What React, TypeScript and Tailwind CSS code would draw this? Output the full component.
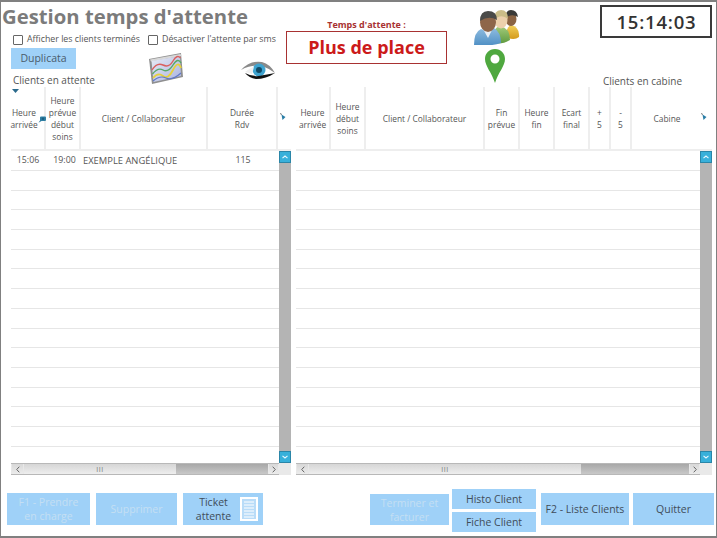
import React from 'react';

// lines under the first row, same in both grids
const EMPTY_ROWS = 14;

function Bubble({ className }: { className: string }) {
  return (
    <svg viewBox="0 0 8 7" className={`absolute ${className}`}>
      <path d="M2 1.5 Q2 .5 3 .5 H7 Q8 .5 8 1.5 V4 Q8 5 7 5 H3.5 L.5 6.8 L2 4.5 Z" fill="#2f7fa3" />
      <circle cx="5" cy="2.8" r="1.3" fill="#1d5f80" />
    </svg>
  );
}

function PinHandle({ className }: { className: string }) {
  return (
    <svg viewBox="0 0 6 8" className={`absolute ${className}`}>
      <path d="M0 .5 L2 1.5" stroke="#555" strokeWidth="0.8" />
      <path d="M1.5 1.5 L5.5 4 L2.5 7 Z" fill="#2a7da6" />
    </svg>
  );
}

function HeaderCell({ w, lines, last, extra = '' }: { w: string; lines: string[]; last?: boolean; extra?: string }) {
  return (
    <div className={`${w} ${extra} h-full shrink-0 flex flex-col items-center justify-center pt-[2px] ${last ? '' : 'border-r-2 border-[#eeeeee]'}`}>
      {lines.map((l, i) => (
        <div key={i} className="text-[8.4px] leading-[12px] text-[#555555] whitespace-nowrap">{l}</div>
      ))}
    </div>
  );
}

function ScrollBtn({ up }: { up?: boolean }) {
  return (
    <div className="w-full h-[12px] shrink-0 bg-[#38b0da] border border-[#2a86a8] flex items-center justify-center">
      <svg viewBox="0 0 6 4" className="w-[6px] h-[4px]">
        <path d={up ? 'M.5 3.2 L3 1 L5.5 3.2' : 'M.5 .8 L3 3 L5.5 .8'} fill="none" stroke="#e8f8ff" strokeWidth="1.1" />
      </svg>
    </div>
  );
}

function HArrow({ right, w }: { right?: boolean; w: string }) {
  return (
    <div className={`${w} h-full shrink-0 flex items-center justify-center bg-gradient-to-b from-[#d8d8d8] to-[#ececec] border-x border-[#e8e8e8]`}>
      <svg viewBox="0 0 4 7" className="w-[4px] h-[7px]">
        <path d={right ? 'M.7 .7 L3.3 3.5 L.7 6.3' : 'M3.3 .7 L.7 3.5 L3.3 6.3'} fill="none" stroke="#666" strokeWidth="1" />
      </svg>
    </div>
  );
}

function GridTable({
  width,
  thumb,
  children,
  firstRow,
}: {
  width: string;
  thumb: string;
  children: React.ReactNode;
  firstRow: React.ReactNode;
}) {
  return (
    <div className={`${width} h-full flex flex-col shrink-0`}>
      <div className="h-[64px] flex border-b-2 border-[#eeeeee] shrink-0 relative">{children}</div>
      <div className="flex h-[312px] shrink-0">
        <div className="flex-1 flex flex-col min-w-0">
          {firstRow}
          {Array.from({ length: EMPTY_ROWS }).map((_, i) => (
            <div key={i} className="h-[19.7px] shrink-0 border-b border-[#e6e6e6]" />
          ))}
        </div>
        <div className="w-[12px] shrink-0 flex flex-col bg-[#b4b4b4]">
          <ScrollBtn up />
          <div className="flex-1" />
          <ScrollBtn />
        </div>
      </div>
      <div className="h-[12px] flex shrink-0">
        <div className="flex-1 flex min-w-0 border-y border-[#b8b8b8]">
          <HArrow w="w-[13px]" />
          <div className={`${thumb} h-full shrink-0 flex items-center justify-center bg-gradient-to-b from-[#d6d6d6] to-[#eeeeee]`}>
            <span className="text-[7px] leading-none text-[#777777] tracking-[0.5px]">III</span>
          </div>
          <div className="flex-1 h-full bg-gradient-to-b from-[#a8a8a8] to-[#c8c8c8]" />
          <HArrow right w="w-[11px]" />
        </div>
        <div className="w-[12px] shrink-0 bg-[#e9e9e9]" />
      </div>
    </div>
  );
}

function ActionBtn({
  children,
  w,
  h = 'h-[32px]',
  disabled,
}: {
  children: React.ReactNode;
  w: string;
  h?: string;
  disabled?: boolean;
}) {
  return (
    <div
      className={`${w} ${h} shrink-0 bg-[#9fd1f8] flex items-center justify-center text-center text-[10.5px] leading-[14px] ${
        disabled ? 'text-[#c4dff3]' : 'text-[#3f4d5a]'
      }`}
    >
      {children}
    </div>
  );
}

function PeopleIcon() {
  return (
    <svg viewBox="0 0 46 35" className="w-[46px] h-[35px] shrink-0">
      <defs>
        <linearGradient id="shirtBlue" x1="0" y1="0" x2="0" y2="1">
          <stop offset="0" stopColor="#8fbce0" />
          <stop offset="1" stopColor="#4f8fc4" />
        </linearGradient>
        <linearGradient id="shirtGreen" x1="0" y1="0" x2="0" y2="1">
          <stop offset="0" stopColor="#a4cc7c" />
          <stop offset="1" stopColor="#5f9a3f" />
        </linearGradient>
        <linearGradient id="shirtYellow" x1="0" y1="0" x2="0" y2="1">
          <stop offset="0" stopColor="#f2d05a" />
          <stop offset="1" stopColor="#d49a1c" />
        </linearGradient>
      </defs>
      <path d="M32 27 Q32 17 37 15 Q46 17 45 27 Q40 31 32 27 Z" fill="url(#shirtYellow)" />
      <ellipse cx="37" cy="9" rx="5.5" ry="7" fill="#8a6343" />
      <path d="M31 8 Q32 0 37 0 Q43 0 44 7 Q38 3 31 8 Z" fill="#3a3a38" />
      <path d="M19 33 Q18 18 26 16 Q36 18 36 30 Q28 35 19 33 Z" fill="url(#shirtGreen)" />
      <ellipse cx="27" cy="10" rx="6.5" ry="8.5" fill="#ecd0ac" />
      <path d="M20 10 Q20 0 27 0 Q34 0 34 9 Q27 3 20 10 Z" fill="#cbbd88" />
      <path d="M0 35 Q0 22 7 19 L14 22 L20 18 Q27 22 27 33 Q14 37 0 35 Z" fill="url(#shirtBlue)" />
      <path d="M9 19 L14 28 L19 18 L14 21 Z" fill="#e8eef4" />
      <ellipse cx="14" cy="12" rx="8" ry="10" fill="#8e664a" />
      <path d="M6 11 Q6 1 14 1 Q23 1 23 10 Q15 5 6 11 Z" fill="#4a4a48" />
    </svg>
  );
}

function ChartIcon() {
  return (
    <svg viewBox="0 0 36 32" className="w-[36px] h-[32px] mt-[5px] shrink-0">
      <defs>
        <linearGradient id="chartBg" x1="0" y1="0" x2="1" y2="1">
          <stop offset="0" stopColor="#e8ecf6" />
          <stop offset="1" stopColor="#a9b2de" />
        </linearGradient>
      </defs>
      <path d="M1 6 L33 0 L35 24 L4 31 Z" fill="#8f8f8f" />
      <path d="M2 6.5 L32.5 1 L33.5 3 L3 8.5 Z" fill="#d8d8d8" />
      <path d="M3.5 8 L32 3 L33 23 L5.5 29 Z" fill="url(#chartBg)" />
      <path d="M4 17 Q9 9 15 12 T25 8 T32.5 5" fill="none" stroke="#d9605f" strokeWidth="1.4" />
      <path d="M4.5 21 Q10 14 15 17 T25 12 T33 10" fill="none" stroke="#58a868" strokeWidth="1.4" />
      <path d="M5 25 Q10 19 15 23 T25 17 T33 15" fill="none" stroke="#e6d13c" strokeWidth="1.8" />
      <path d="M5 28 Q12 22 18 25 T33 20" fill="none" stroke="#5f78c6" strokeWidth="1.1" />
    </svg>
  );
}

export default function App() {
  return (
    <div
      className="w-[717px] h-[538px] bg-white overflow-hidden flex flex-col"
      style={{ fontFamily: '"Open Sans", "Noto Sans", sans-serif' }}
    >
      <div className="h-[538px] border-x border-t-2 border-b-2 border-[#808080] flex flex-col shrink-0">
        {/* top area */}
        <div className="h-[85px] flex shrink-0">
          <div className="w-[282px] shrink-0 flex flex-col">
            <h1 className="text-[20.3px] leading-[28px] font-bold text-[#7b7b7b] pl-[1px] whitespace-nowrap">Gestion temps d'attente</h1>
            <div className="flex items-center mt-[3px] pl-[12px] h-[13px] text-[8.8px] text-[#555555] whitespace-nowrap">
              <span className="w-[10px] h-[10px] border border-[#666666] rounded-[1px] mr-[4px] shrink-0" />
              <span className="w-[121px] shrink-0">Afficher les clients terminés</span>
              <span className="w-[10px] h-[10px] border border-[#666666] rounded-[1px] mr-[4px] shrink-0" />
              <span>Désactiver l'attente par sms</span>
            </div>
            <div className="flex pl-[10px] mt-[2px]">
              <div className="w-[137px] shrink-0">
                <div className="w-[65px] h-[21px] bg-[#9fd1f8] flex items-center justify-center text-[10.5px] text-[#4a5b6b]">Duplicata</div>
                <div className="pl-[2px] mt-[4px] text-[10px] leading-[14px] text-[#555555] whitespace-nowrap">Clients en attente</div>
              </div>
              <ChartIcon />
              <svg viewBox="0 0 36 20" className="w-[36px] h-[20px] mt-[11px] ml-[56px] shrink-0">
                <path d="M1 11 Q10 1 22 3 Q30 5 35 14 Q28 9 22 7 Q12 5 1 11 Z" fill="#8a8a8a" />
                <circle cx="19" cy="11" r="6.5" fill="#3ea3cf" />
                <circle cx="19" cy="11" r="3" fill="#124a66" />
                <path d="M5 13 Q12 8 14 8 L12 15 Q10 14 5 13 Z" fill="#efefef" />
                <path d="M5 14 Q14 19 24 16 Q30 15 35 14 Q26 20 16 20 Q9 19 5 14 Z" fill="#111111" />
              </svg>
            </div>
          </div>
          <div className="w-[161px] ml-[3px] shrink-0 flex flex-col items-center pt-[17px]">
            <div className="text-[9px] leading-[12px] font-bold text-[#a83232] whitespace-nowrap">Temps d'attente :</div>
            <div className="w-full h-[33px] border border-[#a83232] flex items-center justify-center text-[18px] font-bold text-[#cc1a1a] whitespace-nowrap">Plus de place</div>
          </div>
          <div className="w-[50px] ml-[27px] shrink-0 flex flex-col items-start pt-[8px]">
            <PeopleIcon />
            <svg viewBox="0 0 20 34" className="w-[20px] h-[34px] mt-[4px] ml-[11px] shrink-0">
              <path fillRule="evenodd" d="M10 0 C4 0 0 4.5 0 10 C0 17 7 24 10 34 C13 24 20 17 20 10 C20 4.5 16 0 10 0 Z M10 5.5 A4.5 4.5 0 1 1 10 14.5 A4.5 4.5 0 1 1 10 5.5 Z" fill="#4fa83f" />
            </svg>
          </div>
          <div className="flex-1 min-w-0 flex flex-col items-end pt-[3px] pr-[4px]">
            <div className="w-[112px] h-[33px] border-2 border-[#3a3a3a] flex items-center justify-center pl-[1px] text-[18.5px] font-semibold tracking-[0.8px] text-[#333333]">15:14:03</div>
            <div className="mt-auto mb-[-1px] pr-[30px] text-[10px] leading-[14px] text-[#555555] whitespace-nowrap">Clients en cabine</div>
          </div>
        </div>

        {/* tables */}
        <div className="h-[388px] flex pl-[10px] shrink-0">
          <GridTable
            width="w-[280px]"
            thumb="w-[152px]"
            firstRow={
              <div className="h-[20px] shrink-0 flex items-center pt-[1px] border-b border-[#e6e6e6] text-[8.8px] text-[#555555]">
                <span className="w-[34px] text-center shrink-0">15:06</span>
                <span className="w-[36px] pl-[3px] text-center shrink-0">19:00</span>
                <span className="w-[127px] pl-[2px] text-[9.4px] shrink-0 whitespace-nowrap">EXEMPLE ANGÉLIQUE</span>
                <span className="w-[70px] text-center shrink-0">115</span>
              </div>
            }
          >
            <HeaderCell w="w-[35px]" extra="pr-[7px]" lines={['Heure', 'arrivée']} />
            <HeaderCell w="w-[35px]" lines={['Heure', 'prévue', 'début', 'soins']} />
            <HeaderCell w="w-[127px]" lines={['Client / Collaborateur']} />
            <HeaderCell w="w-[70px]" lines={['Durée', 'Rdv']} />
            <HeaderCell w="w-[13px]" lines={[]} last />
            <svg viewBox="0 0 7 4" className="absolute left-[1px] top-[2px] w-[7px] h-[4px]">
              <path d="M0 0 H7 L3.5 4 Z" fill="#2b6a8c" />
            </svg>
            <Bubble className="left-[27px] top-[29px] w-[8px] h-[7px]" />
            <PinHandle className="left-[269px] top-[26px] w-[6px] h-[8px]" />
          </GridTable>
          <div className="w-[5px] shrink-0" />
          <GridTable
            width="w-[416px]"
            thumb="w-[272px]"
            firstRow={<div className="h-[20px] shrink-0 border-b border-[#e6e6e6]" />}
          >
            <HeaderCell w="w-[35px]" lines={['Heure', 'arrivée']} />
            <HeaderCell w="w-[35px]" lines={['Heure', 'début', 'soins']} />
            <HeaderCell w="w-[119px]" lines={['Client / Collaborateur']} />
            <HeaderCell w="w-[35px]" lines={['Fin', 'prévue']} />
            <HeaderCell w="w-[35px]" lines={['Heure', 'fin']} />
            <HeaderCell w="w-[35px]" lines={['Ecart', 'final']} />
            <HeaderCell w="w-[21px]" lines={['+', '5']} />
            <HeaderCell w="w-[21px]" lines={['-', '5']} />
            <HeaderCell w="w-[80px]" extra="pr-[10px]" lines={['Cabine']} last />
            <PinHandle className="left-[405px] top-[26px] w-[6px] h-[8px]" />
          </GridTable>
        </div>

        {/* action buttons */}
        <div className="flex-1 min-h-0 flex items-start pl-[6px] pt-[14px]">
          <div className="flex gap-[6px] mt-[4px]">
            <ActionBtn w="w-[83px]" disabled>
              <span>F1 - Prendre<br />en charge</span>
            </ActionBtn>
            <ActionBtn w="w-[81px]" disabled>Supprimer</ActionBtn>
            <ActionBtn w="w-[80px]">
              <span className="w-[50px]">Ticket<br />attente</span>
              <svg viewBox="0 0 18 24" className="w-[18px] h-[24px] ml-[1px]">
                <rect x="1" y="1" width="16" height="22" fill="#b9dcf8" stroke="#ffffff" strokeWidth="2" />
                <path d="M4 5H14M4 8H14M4 11H14M4 14H14M4 17H14M4 20H14" stroke="#ffffff" strokeWidth="1" />
              </svg>
            </ActionBtn>
          </div>
          <div className="flex items-start ml-[107px] h-[43px]">
            <div className="mt-[5px]">
              <ActionBtn w="w-[79px]" h="h-[31px]" disabled>
                <span>Terminer et<br />facturer</span>
              </ActionBtn>
            </div>
            <div className="flex flex-col gap-[3px] ml-[3px] mr-[5px]">
              <ActionBtn w="w-[84px]" h="h-[20px]">Histo Client</ActionBtn>
              <ActionBtn w="w-[84px]" h="h-[20px]">Fiche Client</ActionBtn>
            </div>
            <div className="flex gap-[4px] mt-[4px]">
              <ActionBtn w="w-[88px]">F2 - Liste Clients</ActionBtn>
              <ActionBtn w="w-[81px]">Quitter</ActionBtn>
            </div>
          </div>
        </div>
      </div>
    </div>
  );
}
